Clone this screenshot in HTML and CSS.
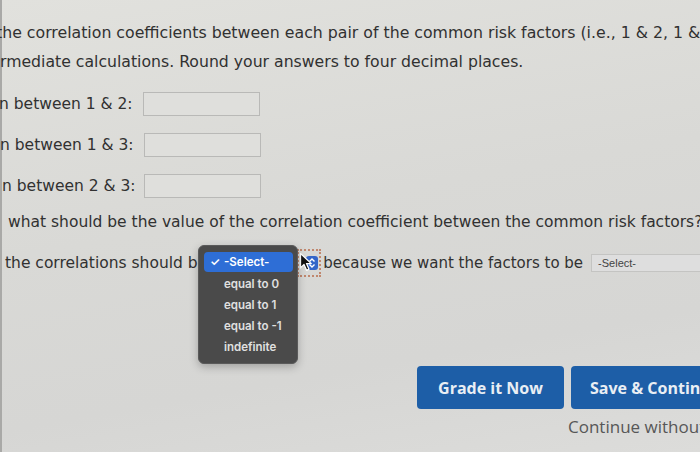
FILE: index.html
```html
<!DOCTYPE html>
<html lang="en">
<head>
<meta charset="utf-8">
<title>Correlation question</title>
<link rel="stylesheet" href="styles.css">
</head>
<body>
<div class="page">
  <div class="intro">
    <div class="line first">the correlation coefficients between each pair of the common risk factors (i.e., 1 &amp; 2, 1 &amp; 3, and 2 &amp; 3).</div>
    <div class="line second">rmediate calculations. Round your answers to four decimal places.</div>
  </div>

  <div class="field-row r1">
    <span class="label">n between 1 &amp; 2:</span>
    <span class="answer"></span>
  </div>
  <div class="field-row r2">
    <span class="label">n between 1 &amp; 3:</span>
    <span class="answer"></span>
  </div>
  <div class="field-row r3">
    <span class="label">n between 2 &amp; 3:</span>
    <span class="answer"></span>
  </div>

  <div class="question">what should be the value of the correlation coefficient between the common risk factors?</div>

  <div class="select-row">
    <span class="phrase">the correlations should be</span>
    <span class="select-one">
      <span class="focus-ring">
        <span class="arrow-box">
          <svg viewBox="0 0 10 12" width="10" height="12"><path d="M2.5 4.5 L5 2 L7.5 4.5 M2.5 7.5 L5 10 L7.5 7.5" fill="none" stroke="#fff" stroke-width="1.4"/></svg>
        </span>
        <svg class="cursor" viewBox="0 0 14 20" width="14" height="20"><path d="M1.5 1.5 L1.5 16 L5 12.5 L7.6 18.3 L10 17.2 L7.5 11.6 L12.3 11.6 Z" fill="#111" stroke="#fff" stroke-width="1.3" stroke-linejoin="round"/></svg>
      </span>
    </span>
    <span class="phrase narrow">because we want the factors to be</span>
    <span class="select-two">-Select-</span>

    <div class="menu">
      <div class="menu-item active"><span class="check">✓</span>-Select-</div>
      <div class="menu-item">equal to 0</div>
      <div class="menu-item">equal to 1</div>
      <div class="menu-item">equal to -1</div>
      <div class="menu-item">indefinite</div>
    </div>
  </div>

  <div class="actions">
    <div class="buttons">
      <span class="btn">Grade it Now</span>
      <span class="btn wide">Save &amp; Continue</span>
    </div>
    <div class="skip">Continue without saving</div>
  </div>
</div>
</body>
</html>
```

FILE: styles.css
```css
html, body {
  margin: 0;
  padding: 0;
}

body {
  width: 700px;
  height: 452px;
  overflow: hidden;
  background: linear-gradient(170deg, #e1e1dd 0%, #d9d9d6 45%, #d6d6d4 75%, #dcdcda 100%);
  box-shadow: inset 2px 0 0 #a9a9a7;
  font-family: "DejaVu Sans", Verdana, sans-serif;
  font-size: 15.5px;
  color: #313131;
}

.page {
  padding-top: 18px;
  width: 700px;
  overflow: hidden;
}

.intro .line {
  line-height: 29px;
  white-space: nowrap;
}

.intro .first {
  font-size: 15.75px;
  margin-left: -4px;
}

.intro .second {
  font-size: 15.7px;
}

.field-row {
  display: flex;
  align-items: center;
  height: 41px;
  gap: 10px;
  white-space: nowrap;
}

.field-row > * {
  flex: none;
}

.field-row.r1 {
  margin-top: 7px;
}

.field-row.r1 .label { margin-left: -1px; }
.field-row.r2 .label { margin-left: 0; }
.field-row.r3 .label { margin-left: 2px; margin-right: -2px; }

.answer {
  display: block;
  width: 115px;
  height: 22px;
  border: 1px solid #b9b9b7;
  background: #dfdfdc;
}

.question {
  margin-top: 2px;
  line-height: 29px;
  padding-left: 8px;
  white-space: nowrap;
}

.select-row {
  position: relative;
  display: flex;
  align-items: center;
  height: 41px;
  margin-top: 5px;
  padding-left: 5px;
  white-space: nowrap;
}

.select-row > * {
  flex: none;
}

.phrase.narrow {
  font-size: 15px;
}

.select-one {
  display: flex;
  justify-content: flex-end;
  width: 110px;
  margin: 0 2px 0 4px;
}

.focus-ring {
  position: relative;
  display: flex;
  align-items: center;
  justify-content: flex-end;
  box-sizing: border-box;
  width: 24px;
  height: 28px;
  border: 2px dotted #c0876e;
  padding-right: 1px;
}

.arrow-box {
  display: flex;
  align-items: center;
  justify-content: center;
  width: 12px;
  height: 14px;
  border-radius: 3px;
  background: #3466c9;
}

.cursor {
  position: absolute;
  left: 0;
  top: 1px;
}

.select-two {
  display: block;
  margin-left: 8px;
  width: 120px;
  height: 16px;
  padding-left: 6px;
  border: 1px solid #c4c4c2;
  border-right: none;
  background: #dedede;
  font-family: "Liberation Sans", Arial, sans-serif;
  font-size: 11px;
  line-height: 16px;
  color: #444;
}

.menu {
  position: absolute;
  left: 198px;
  top: 3px;
  width: 100px;
  box-sizing: border-box;
  padding: 6px 4px 5px 5px;
  background: #4a4a4a;
  border: 1px solid #5a5a5a;
  border-radius: 6px;
  box-shadow: 0 3px 8px rgba(0, 0, 0, 0.25);
  font-family: Inter, "Liberation Sans", sans-serif;
  font-size: 11.5px;
  font-weight: 600;
  color: #e0e0e0;
}

.menu-item {
  height: 21px;
  line-height: 21px;
  padding-left: 20px;
  position: relative;
}

.menu-item.active {
  height: 20px;
  line-height: 20px;
  margin-bottom: 2px;
  background: #2e6ed6;
  border-radius: 4px;
  color: #ffffff;
}

.check {
  position: absolute;
  left: 6px;
  top: 0;
}

.actions {
  margin-top: 83px;
  padding-left: 417px;
  white-space: nowrap;
}

.buttons {
  display: flex;
  gap: 7px;
}

.btn {
  display: flex;
  align-items: center;
  justify-content: center;
  flex: none;
  width: 147px;
  height: 43px;
  border-radius: 4px;
  background: #1d5ea7;
  font-family: "Open Sans", sans-serif;
  font-weight: 700;
  font-size: 16px;
  color: #e9eef4;
}

.btn.wide {
  width: 170px;
  justify-content: flex-start;
  padding-left: 19px;
  box-sizing: border-box;
}

.skip {
  margin-top: 8px;
  padding-left: 151px;
  font-family: "Open Sans", sans-serif;
  font-size: 17px;
  line-height: 20px;
  color: #575757;
}
```
